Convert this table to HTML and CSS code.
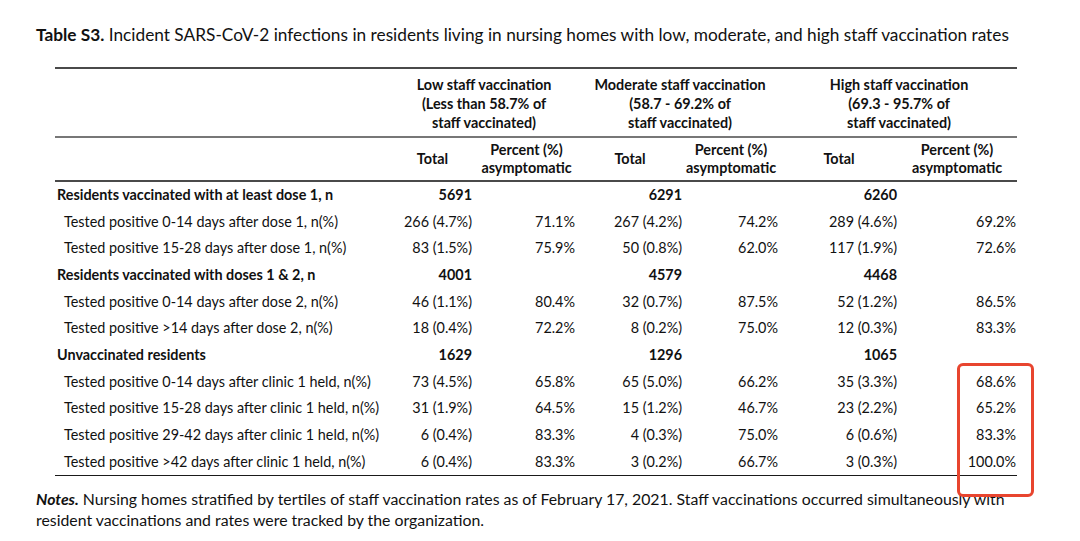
FILE: index.html
```html
<!DOCTYPE html>
<html lang="en">
<head>
<meta charset="utf-8">
<title>Table S3</title>
<link rel="stylesheet" href="styles.css">
</head>
<body>
<div class="page">
  <p class="caption"><b>Table S3.</b> Incident SARS-CoV-2 infections in residents living in nursing homes with low, moderate, and high staff vaccination rates</p>
  <table class="data">
    <colgroup>
      <col class="c-label"><col class="c-lt"><col class="c-lp"><col class="c-mt"><col class="c-mp"><col class="c-ht"><col class="c-hp">
    </colgroup>
    <thead>
      <tr class="group">
        <th></th>
        <th colspan="2">Low staff vaccination<br>(Less than 58.7% of<br>staff vaccinated)</th>
        <th colspan="2">Moderate staff vaccination<br>(58.7 - 69.2% of<br>staff vaccinated)</th>
        <th colspan="2">High staff vaccination<br>(69.3 - 95.7% of<br>staff vaccinated)</th>
      </tr>
      <tr class="sub">
        <th></th>
        <th class="h-lt">Total</th>
        <th class="h-lp">Percent (%)<br>asymptomatic</th>
        <th class="h-mt">Total</th>
        <th class="h-mp">Percent (%)<br>asymptomatic</th>
        <th class="h-ht">Total</th>
        <th class="h-hp">Percent (%)<br>asymptomatic</th>
      </tr>
    </thead>
    <tbody>
      <tr class="head-row"><td class="label">Residents vaccinated with at least dose 1, n</td><td class="v-lt">5691</td><td class="v-lp"></td><td class="v-mt">6291</td><td class="v-mp"></td><td class="v-ht">6260</td><td class="v-hp"></td></tr>
      <tr><td class="label sub-label">Tested positive 0-14 days after dose 1, n(%)</td><td class="v-lt">266 (4.7%)</td><td class="v-lp">71.1%</td><td class="v-mt">267 (4.2%)</td><td class="v-mp">74.2%</td><td class="v-ht">289 (4.6%)</td><td class="v-hp">69.2%</td></tr>
      <tr><td class="label sub-label">Tested positive 15-28 days after dose 1, n(%)</td><td class="v-lt">83 (1.5%)</td><td class="v-lp">75.9%</td><td class="v-mt">50 (0.8%)</td><td class="v-mp">62.0%</td><td class="v-ht">117 (1.9%)</td><td class="v-hp">72.6%</td></tr>
      <tr class="head-row"><td class="label">Residents vaccinated with doses 1 &amp; 2, n</td><td class="v-lt">4001</td><td class="v-lp"></td><td class="v-mt">4579</td><td class="v-mp"></td><td class="v-ht">4468</td><td class="v-hp"></td></tr>
      <tr><td class="label sub-label">Tested positive 0-14 days after dose 2, n(%)</td><td class="v-lt">46 (1.1%)</td><td class="v-lp">80.4%</td><td class="v-mt">32 (0.7%)</td><td class="v-mp">87.5%</td><td class="v-ht">52 (1.2%)</td><td class="v-hp">86.5%</td></tr>
      <tr><td class="label sub-label">Tested positive &gt;14 days after dose 2, n(%)</td><td class="v-lt">18 (0.4%)</td><td class="v-lp">72.2%</td><td class="v-mt">8 (0.2%)</td><td class="v-mp">75.0%</td><td class="v-ht">12 (0.3%)</td><td class="v-hp">83.3%</td></tr>
      <tr class="head-row"><td class="label">Unvaccinated residents</td><td class="v-lt">1629</td><td class="v-lp"></td><td class="v-mt">1296</td><td class="v-mp"></td><td class="v-ht">1065</td><td class="v-hp"></td></tr>
      <tr><td class="label sub-label">Tested positive 0-14 days after clinic 1 held, n(%)</td><td class="v-lt">73 (4.5%)</td><td class="v-lp">65.8%</td><td class="v-mt">65 (5.0%)</td><td class="v-mp">66.2%</td><td class="v-ht">35 (3.3%)</td><td class="v-hp">68.6%</td></tr>
      <tr><td class="label sub-label">Tested positive 15-28 days after clinic 1 held, n(%)</td><td class="v-lt">31 (1.9%)</td><td class="v-lp">64.5%</td><td class="v-mt">15 (1.2%)</td><td class="v-mp">46.7%</td><td class="v-ht">23 (2.2%)</td><td class="v-hp">65.2%</td></tr>
      <tr><td class="label sub-label">Tested positive 29-42 days after clinic 1 held, n(%)</td><td class="v-lt">6 (0.4%)</td><td class="v-lp">83.3%</td><td class="v-mt">4 (0.3%)</td><td class="v-mp">75.0%</td><td class="v-ht">6 (0.6%)</td><td class="v-hp">83.3%</td></tr>
      <tr class="last"><td class="label sub-label">Tested positive &gt;42 days after clinic 1 held, n(%)</td><td class="v-lt">6 (0.4%)</td><td class="v-lp">83.3%</td><td class="v-mt">3 (0.2%)</td><td class="v-mp">66.7%</td><td class="v-ht">3 (0.3%)</td><td class="v-hp">100.0%</td></tr>
    </tbody>
  </table>
  <p class="notes"><b><i>Notes.</i></b> Nursing homes stratified by tertiles of staff vaccination rates as of February 17, 2021. Staff vaccinations occurred simultaneously with resident vaccinations and rates were tracked by the organization.</p>
  <div class="highlight"></div>
</div>
</body>
</html>
```
FILE: styles.css
```css
html, body {
  margin: 0;
  padding: 0;
  background: #ffffff;
}

.page {
  position: relative;
  width: 1080px;
  height: 541px;
  overflow: hidden;
  font-family: "Lato", "Open Sans", sans-serif;
  color: #111111;
}

.caption {
  margin: 0;
  padding: 25px 0 0 36px;
  font-size: 17.28px;
  line-height: 20px;
  white-space: nowrap;
}

.data {
  margin: 22px 0 0 55px;
  width: 962px;
  table-layout: fixed;
  border-collapse: collapse;
  font-size: 14.4px;
}

.c-label { width: 334px; }
.c-lt { width: 87px; }
.c-lp { width: 103px; }
.c-mt { width: 107px; }
.c-mp { width: 95px; }
.c-ht { width: 122px; }
.c-hp { width: 114px; }

.data th {
  font-weight: 700;
  text-align: center;
  white-space: nowrap;
}

.group th {
  border-top: 2px solid #4a4a4a;
  border-bottom: 2px solid #777777;
  padding: 6px 0 4px;
  line-height: 19px;
}

.sub th {
  border-bottom: 2px solid #4a4a4a;
  height: 42px;
  padding: 0;
  line-height: 18px;
  vertical-align: middle;
}

.sub .h-lt { padding-right: 0; }
.sub .h-lp { padding-right: 2px; }
.sub .h-mt { padding-right: 5px; }
.sub .h-mp { padding-right: 5px; }
.sub .h-ht { padding-right: 6px; }
.sub .h-hp { padding-right: 6px; }

.data td {
  height: 26.67px;
  padding: 0;
  line-height: 26.67px;
  text-align: right;
  white-space: nowrap;
}

.data td.v-lt { padding-right: 4px; }
.data td.v-lp { padding-right: 4px; }
.data td.v-mt { padding-right: 4px; }
.data td.v-mp { padding-right: 3px; }
.data td.v-ht { padding-right: 6px; }
.data td.v-hp { padding-right: 1px; }

.data td.label {
  text-align: left;
  padding-left: 2px;
}

.data td.sub-label { padding-left: 9px; }

.head-row td { font-weight: 700; }

.last td { border-bottom: 1px solid #1a1a1a; }

.notes {
  margin: 13px 0 0 36px;
  width: 1000px;
  font-size: 15.84px;
  line-height: 20.5px;
}

.highlight {
  position: absolute;
  left: 957px;
  top: 363px;
  width: 71px;
  height: 128px;
  border: 3px solid #e8452f;
  border-radius: 6px;
}
```
